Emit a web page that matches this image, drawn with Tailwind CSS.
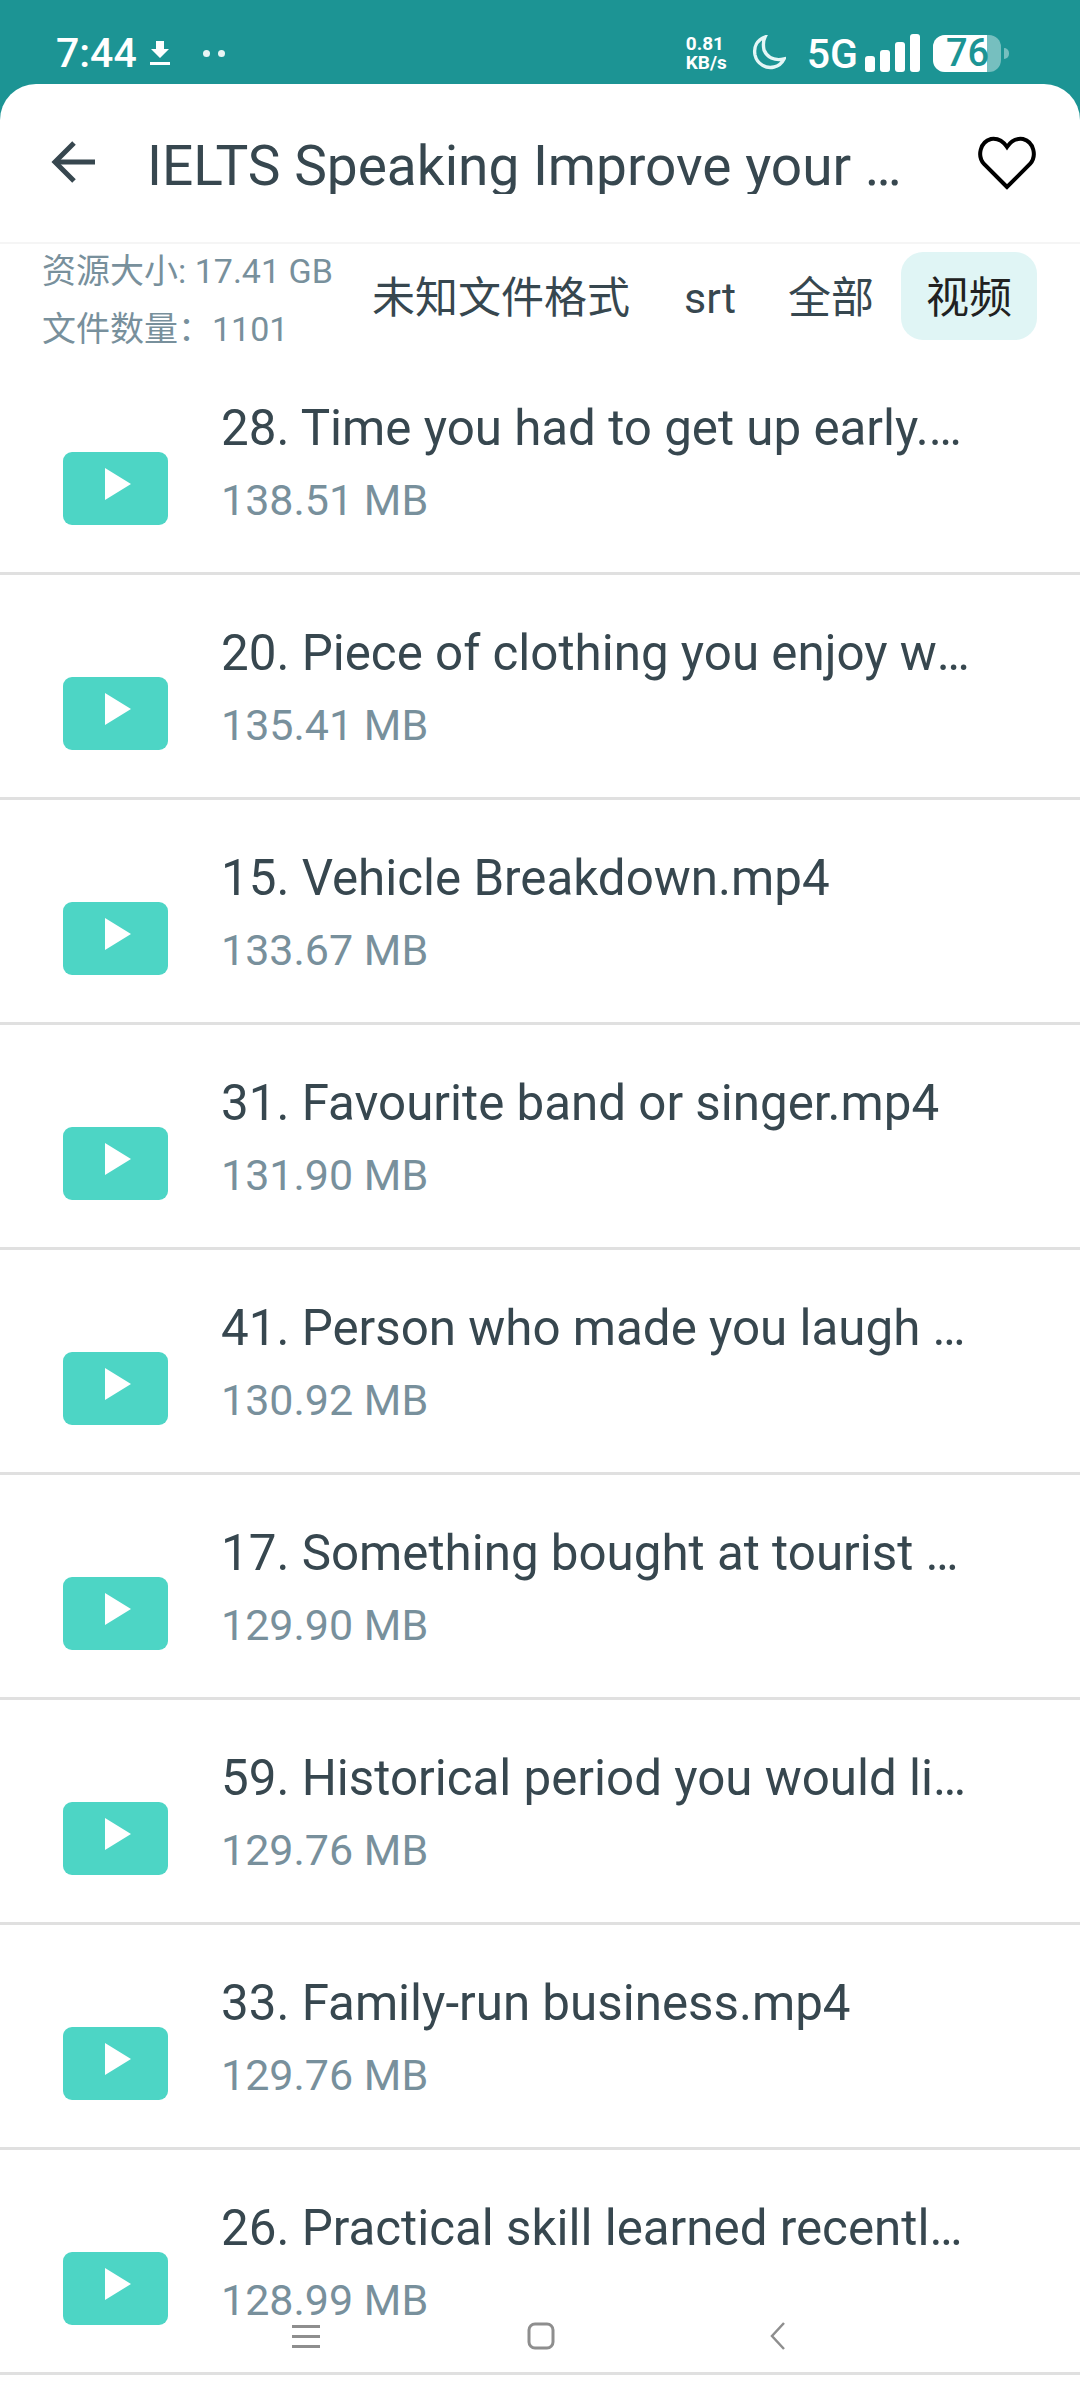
<!DOCTYPE html>
<html lang="en">
<head>
    <meta charset="UTF-8">
    <meta name="viewport" content="width=device-width, initial-scale=1.0">
    <title>IELTS Speaking</title>
    <script src="https://cdn.jsdelivr.net/npm/@tailwindcss/browser@4"></script>
</head>
<body class="bg-[#1c9494] font-['Roboto','Noto_Sans_CJK_SC',sans-serif]">
<div class="relative w-[1080px] h-[2400px] overflow-hidden">

    <!-- Status bar -->
    <div class="h-[84px] flex items-start text-white">
        <div class="flex items-center h-[36px] mt-[35px] pl-[56px]">
            <span class="text-[41px] leading-none font-medium">7:44</span>
            <svg class="ml-[13px]" width="20" height="26" viewBox="0 0 20 26" fill="#fff"><path d="M6 1h8v8h5L10 18 1 9h5z"/><rect x="0" y="22" width="20" height="3"/></svg>
            <span class="ml-[33px] w-[7px] h-[7px] rounded-full bg-white/90"></span>
            <span class="ml-[8px] w-[7px] h-[7px] rounded-full bg-white/90"></span>
        </div>
        <div class="ml-auto flex items-center h-[40px] mt-[33px] pr-[71px]">
            <div class="flex flex-col font-bold text-[19px] leading-[19px] w-[42px]">
                <span>0.81</span>
                <span>KB/s</span>
            </div>
            <svg class="ml-[24px]" width="34" height="36" viewBox="0 0 34 36" fill="none" stroke="#e4f6f6" stroke-width="3.4"><path d="M13 2C5 5 1.500 12 3 20c2 9 11 14 19 12 5-1 8-4 10-8-10 2-17-2-20-9-1-5-1-9 1-13z"/></svg>
            <span class="ml-[21px] mt-[2px] text-[41px] leading-none font-medium">5G</span>
            <div class="ml-[7px] flex items-end gap-[5px] h-[38px]">
                <span class="w-[10px] h-[16px] rounded-[3px] bg-white"></span>
                <span class="w-[10px] h-[22px] rounded-[3px] bg-white"></span>
                <span class="w-[10px] h-[30px] rounded-[3px] bg-white"></span>
                <span class="w-[10px] h-[38px] rounded-[3px] bg-white"></span>
            </div>
            <div class="ml-[13px] flex items-center">
                <div class="relative w-[68px] h-[37px] rounded-[12px] bg-white/40 overflow-hidden">
                    <div class="w-[54px] h-[37px] bg-white"></div>
                    <span class="absolute left-[13px] top-[0px] text-[38px] leading-[37px] font-medium text-[#1c9494]">76</span>
                </div>
                <span class="ml-[3px] w-[5px] h-[11px] rounded-r-full bg-white/40"></span>
            </div>
        </div>
    </div>

    <!-- Sheet -->
    <div class="bg-white rounded-t-[36px] h-[2316px]">
        <header class="h-[160px] flex items-center border-b-2 border-[#f5f5f5]">
            <svg class="ml-[51px] shrink-0" width="46" height="46" viewBox="0 0 46 46" fill="none" stroke="#37474f" stroke-width="5"><path d="M44 22H5"/><path d="M23 3L4 22l19 19"/></svg>
            <h1 class="ml-[50px] w-[756px] truncate text-[55px] leading-none text-[#37474f] mt-[6px]">IELTS Speaking Improve your English Fluency</h1>
            <svg class="ml-auto mr-[44px]" width="58" height="54" viewBox="0 0 58 54" fill="none" stroke="#000" stroke-width="4"><path d="M29 51L6 28C-1 20 2 6 13 3c7-1 12 2 16 8 4-6 9-9 16-8 11 3 14 17 7 25z"/></svg>
        </header>

        <!-- Size info and file type tabs -->
        <div class="h-[106px] flex items-start justify-between pr-[43px]">
            <div class="pl-[42px] -mt-[2px] whitespace-nowrap text-[#78909c] text-[34px] leading-[58px]">
                <p>资源大小: 17.41 GB</p>
                <p>文件数量：1101</p>
            </div>
            <div class="flex items-center h-[88px] mt-[8px] text-[43px] text-[#37474f]">
                <span class="pt-[5px]">未知文件格式</span>
                <span class="ml-[54px] pt-[5px]">srt</span>
                <span class="ml-[52px] pt-[5px]">全部</span>
                <span class="ml-[27px] h-[88px] px-[25px] pt-[5px] flex items-center rounded-[22px] bg-[#e0f5f5] text-[#212121]">视频</span>
            </div>
        </div>

        <!-- File list -->
        <ul id="list">
            <li class="h-[225px] flex border-b-[3px] border-[#e0e0e0]">
                <div class="w-[105px] h-[73px] ml-[63px] mt-[102px] rounded-[9px] bg-[#4dd5c5] flex items-center justify-center shrink-0"><svg class="-mt-[10px] ml-[4px]" width="26" height="32" viewBox="0 0 26 32" fill="#fff"><path d="M0 0l26 16L0 32z"/></svg></div>
                <div class="ml-[53px] w-[754px] pt-[48px]">
                    <p class="truncate text-[49.300px] leading-[60px] text-[#37474f]">28. Time you had to get up early.mp4</p>
                    <p class="text-[43px] leading-[50px] mt-[17px] text-[#78909c]">138.51 MB</p>
                </div>
            </li>
            <li class="h-[225px] flex border-b-[3px] border-[#e0e0e0]">
                <div class="w-[105px] h-[73px] ml-[63px] mt-[102px] rounded-[9px] bg-[#4dd5c5] flex items-center justify-center shrink-0"><svg class="-mt-[10px] ml-[4px]" width="26" height="32" viewBox="0 0 26 32" fill="#fff"><path d="M0 0l26 16L0 32z"/></svg></div>
                <div class="ml-[53px] w-[754px] pt-[48px]">
                    <p class="truncate text-[49.300px] leading-[60px] text-[#37474f]">20. Piece of clothing you enjoy wearing.mp4</p>
                    <p class="text-[43px] leading-[50px] mt-[17px] text-[#78909c]">135.41 MB</p>
                </div>
            </li>
            <li class="h-[225px] flex border-b-[3px] border-[#e0e0e0]">
                <div class="w-[105px] h-[73px] ml-[63px] mt-[102px] rounded-[9px] bg-[#4dd5c5] flex items-center justify-center shrink-0"><svg class="-mt-[10px] ml-[4px]" width="26" height="32" viewBox="0 0 26 32" fill="#fff"><path d="M0 0l26 16L0 32z"/></svg></div>
                <div class="ml-[53px] w-[754px] pt-[48px]">
                    <p class="truncate text-[49.300px] leading-[60px] text-[#37474f]">15. Vehicle Breakdown.mp4</p>
                    <p class="text-[43px] leading-[50px] mt-[17px] text-[#78909c]">133.67 MB</p>
                </div>
            </li>
            <li class="h-[225px] flex border-b-[3px] border-[#e0e0e0]">
                <div class="w-[105px] h-[73px] ml-[63px] mt-[102px] rounded-[9px] bg-[#4dd5c5] flex items-center justify-center shrink-0"><svg class="-mt-[10px] ml-[4px]" width="26" height="32" viewBox="0 0 26 32" fill="#fff"><path d="M0 0l26 16L0 32z"/></svg></div>
                <div class="ml-[53px] w-[754px] pt-[48px]">
                    <p class="truncate text-[49.300px] leading-[60px] text-[#37474f]">31. Favourite band or singer.mp4</p>
                    <p class="text-[43px] leading-[50px] mt-[17px] text-[#78909c]">131.90 MB</p>
                </div>
            </li>
            <li class="h-[225px] flex border-b-[3px] border-[#e0e0e0]">
                <div class="w-[105px] h-[73px] ml-[63px] mt-[102px] rounded-[9px] bg-[#4dd5c5] flex items-center justify-center shrink-0"><svg class="-mt-[10px] ml-[4px]" width="26" height="32" viewBox="0 0 26 32" fill="#fff"><path d="M0 0l26 16L0 32z"/></svg></div>
                <div class="ml-[53px] w-[754px] pt-[48px]">
                    <p class="truncate text-[49.300px] leading-[60px] text-[#37474f]">41. Person who made you laugh recently.mp4</p>
                    <p class="text-[43px] leading-[50px] mt-[17px] text-[#78909c]">130.92 MB</p>
                </div>
            </li>
            <li class="h-[225px] flex border-b-[3px] border-[#e0e0e0]">
                <div class="w-[105px] h-[73px] ml-[63px] mt-[102px] rounded-[9px] bg-[#4dd5c5] flex items-center justify-center shrink-0"><svg class="-mt-[10px] ml-[4px]" width="26" height="32" viewBox="0 0 26 32" fill="#fff"><path d="M0 0l26 16L0 32z"/></svg></div>
                <div class="ml-[53px] w-[754px] pt-[48px]">
                    <p class="truncate text-[49.300px] leading-[60px] text-[#37474f]">17. Something bought at tourist attraction.mp4</p>
                    <p class="text-[43px] leading-[50px] mt-[17px] text-[#78909c]">129.90 MB</p>
                </div>
            </li>
            <li class="h-[225px] flex border-b-[3px] border-[#e0e0e0]">
                <div class="w-[105px] h-[73px] ml-[63px] mt-[102px] rounded-[9px] bg-[#4dd5c5] flex items-center justify-center shrink-0"><svg class="-mt-[10px] ml-[4px]" width="26" height="32" viewBox="0 0 26 32" fill="#fff"><path d="M0 0l26 16L0 32z"/></svg></div>
                <div class="ml-[53px] w-[754px] pt-[48px]">
                    <p class="truncate text-[49.300px] leading-[60px] text-[#37474f]">59. Historical period you would like to visit.mp4</p>
                    <p class="text-[43px] leading-[50px] mt-[17px] text-[#78909c]">129.76 MB</p>
                </div>
            </li>
            <li class="h-[225px] flex border-b-[3px] border-[#e0e0e0]">
                <div class="w-[105px] h-[73px] ml-[63px] mt-[102px] rounded-[9px] bg-[#4dd5c5] flex items-center justify-center shrink-0"><svg class="-mt-[10px] ml-[4px]" width="26" height="32" viewBox="0 0 26 32" fill="#fff"><path d="M0 0l26 16L0 32z"/></svg></div>
                <div class="ml-[53px] w-[754px] pt-[48px]">
                    <p class="truncate text-[49.300px] leading-[60px] text-[#37474f]">33. Family-run business.mp4</p>
                    <p class="text-[43px] leading-[50px] mt-[17px] text-[#78909c]">129.76 MB</p>
                </div>
            </li>
            <li class="h-[225px] flex border-b-[3px] border-[#e0e0e0]">
                <div class="w-[105px] h-[73px] ml-[63px] mt-[102px] rounded-[9px] bg-[#4dd5c5] flex items-center justify-center shrink-0"><svg class="-mt-[10px] ml-[4px]" width="26" height="32" viewBox="0 0 26 32" fill="#fff"><path d="M0 0l26 16L0 32z"/></svg></div>
                <div class="ml-[53px] w-[754px] pt-[48px]">
                    <p class="truncate text-[49.300px] leading-[60px] text-[#37474f]">26. Practical skill learned recently.mp4</p>
                    <p class="text-[43px] leading-[50px] mt-[17px] text-[#78909c]">128.99 MB</p>
                </div>
            </li>
        </ul>
    </div>

    <!-- Navigation bar, sits over the list -->
    <div class="absolute left-0 top-[2322px] w-full h-[28px] flex items-center">
        <svg class="ml-[292px]" width="28" height="24" viewBox="0 0 28 24" fill="#8e8e8e"><rect width="28" height="3" y="1"/><rect width="28" height="3" y="11"/><rect width="28" height="3" y="21"/></svg>
        <svg class="ml-[207px]" width="28" height="28" viewBox="0 0 28 28" fill="none" stroke="#8e8e8e" stroke-width="3"><rect x="2" y="2" width="24" height="24" rx="6"/></svg>
        <svg class="ml-[214px]" width="16" height="28" viewBox="0 0 16 28" fill="none" stroke="#8e8e8e" stroke-width="2.500"><path d="M15 1L3 14l12 13"/></svg>
    </div>
</div>
</body>
</html>
